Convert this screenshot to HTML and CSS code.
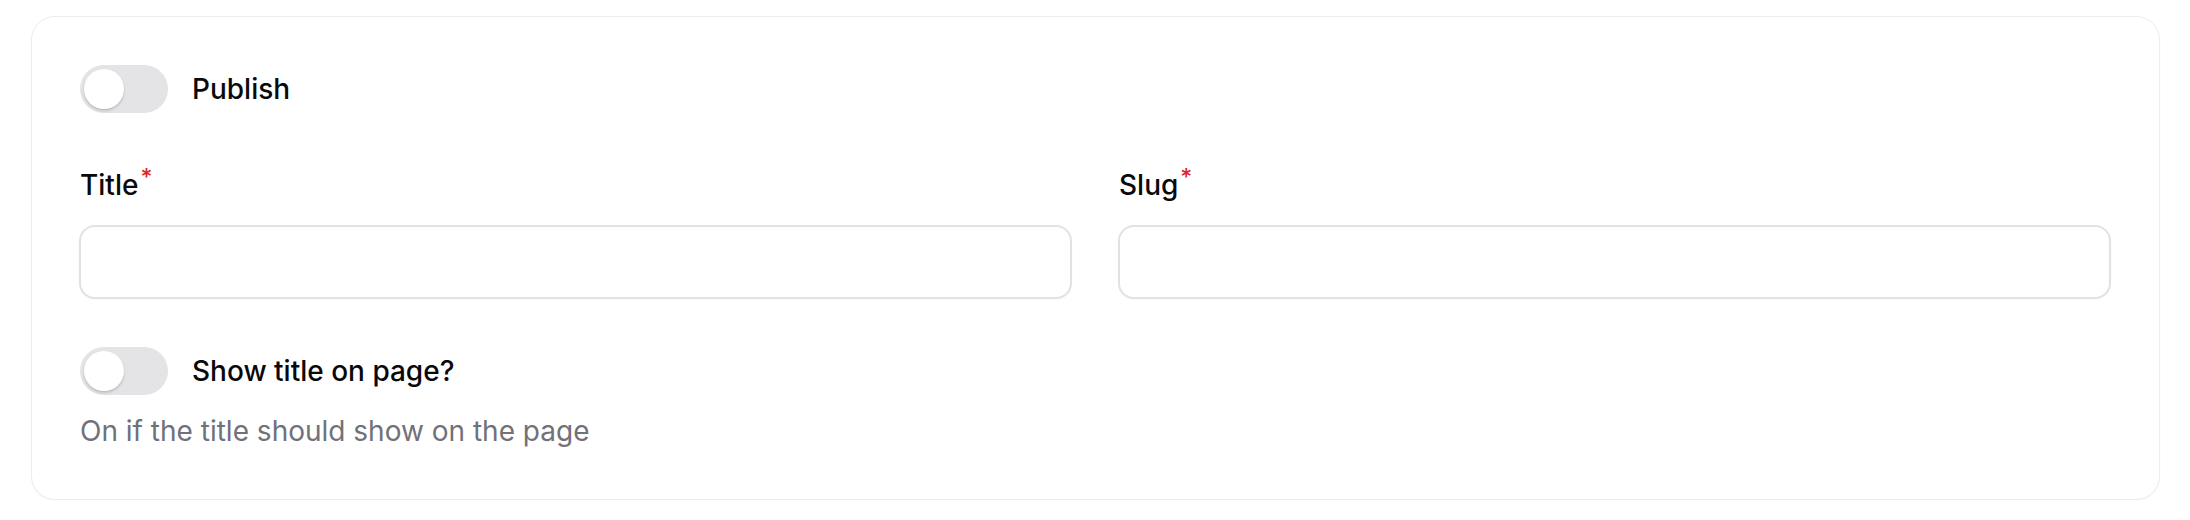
FILE: index.html
```html
<!DOCTYPE html>
<html lang="en">
<head>
<meta charset="utf-8">
<link rel="stylesheet" href="styles.css">
</head>
<body>
<div class="page">
  <section class="card">
    <div class="field">
      <label class="toggle-row">
        <span class="toggle"><span class="knob"></span></span>
        <span class="toggle-label">Publish</span>
      </label>
    </div>
    <div class="grid">
      <div class="field">
        <label class="label">Title<sup class="req">*</sup></label>
        <div class="input"></div>
      </div>
      <div class="field">
        <label class="label">Slug<sup class="req">*</sup></label>
        <div class="input"></div>
      </div>
    </div>
    <div class="field">
      <label class="toggle-row">
        <span class="toggle"><span class="knob"></span></span>
        <span class="toggle-label">Show title on page?</span>
      </label>
      <p class="hint">On if the title should show on the page</p>
    </div>
  </section>
</div>
</body>
</html>
```
FILE: styles.css
```css
* { box-sizing: border-box; }
html, body { margin: 0; padding: 0; background: #ffffff; }
body {
  font-family: Inter, "Noto Sans", sans-serif;
  color: #09090b;
}
.page {
  padding: 16px 30px 0 31px;
}
.card {
  border: 1.5px solid #ececec;
  border-radius: 24px;
  background: #fff;
  padding: 48px 48px 48px 47px;
  display: flex;
  flex-direction: column;
  gap: 48px;
  box-shadow: 0 1px 2px rgba(0,0,0,0.03);
}
.field {
  display: flex;
  flex-direction: column;
  gap: 16px;
}
.grid {
  display: grid;
  grid-template-columns: 1fr 1fr;
  column-gap: 46px;
}
.toggle-row {
  display: flex;
  align-items: center;
  gap: 24px;
  padding-left: 1px;
}
.toggle {
  width: 88px;
  height: 48px;
  border-radius: 24px;
  background: #e4e4e7;
  padding: 4px;
  display: flex;
  flex: none;
}
.knob {
  width: 40px;
  height: 40px;
  border-radius: 50%;
  background: #fff;
  box-shadow: 0 2px 3px rgba(0,0,0,0.12), 0 1px 2px rgba(0,0,0,0.08);
}
.toggle-label {
  font-size: 28px;
  line-height: 48px;
  font-weight: 500;
  color: #09090b;
}
.label {
  font-size: 28px;
  line-height: 48px;
  font-weight: 500;
  color: #09090b;
  padding-left: 1px;
}
.req {
  color: #dc2626;
  font-weight: 500;
  font-size: 23px;
  line-height: 0;
  margin-left: 2px;
}
.input {
  height: 74px;
  border: 2px solid #e2e2e4;
  border-radius: 16px;
  background: #fff;
  box-shadow: 0 1px 2px rgba(0,0,0,0.03);
}
.hint {
  margin: 0;
  font-size: 28px;
  line-height: 40px;
  color: #71717a;
  padding-left: 1px;
}
```
